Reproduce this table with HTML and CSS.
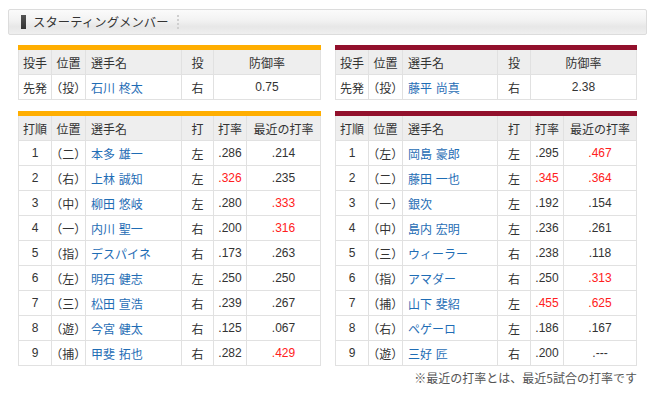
FILE: index.html
```html
<!DOCTYPE html>
<html lang="ja">
<head>
<meta charset="utf-8">
<title>スターティングメンバー</title>
<link rel="stylesheet" href="styles.css">
</head>
<body>
<div class="page">
  <div class="title">
    <span class="title-bar"></span>
    <span class="title-text">スターティングメンバー</span>
    <span class="title-sep"></span>
  </div>

  <div class="games">
    <div class="side">
      <div class="tbl home">
        <table>
          <colgroup><col class="c-order"><col class="c-pos"><col class="c-name"><col class="c-hand"><col></colgroup>
          <tr><th>投手</th><th>位置</th><th class="name">選手名</th><th>投</th><th>防御率</th></tr>
          <tr><td>先発</td><td class="pos">（投）</td><td class="name"><a>石川 柊太</a></td><td>右</td><td>0.75</td></tr>
        </table>
      </div>
      <div class="tbl home">
        <table>
          <colgroup><col class="c-order"><col class="c-pos"><col class="c-name"><col class="c-hand"><col class="c-avg"><col></colgroup>
          <tr><th>打順</th><th>位置</th><th class="name">選手名</th><th>打</th><th>打率</th><th>最近の打率</th></tr>
          <tr><td>1</td><td class="pos">（二）</td><td class="name"><a>本多 雄一</a></td><td>左</td><td>.286</td><td>.214</td></tr>
          <tr><td>2</td><td class="pos">（右）</td><td class="name"><a>上林 誠知</a></td><td>左</td><td class="hot">.326</td><td>.235</td></tr>
          <tr><td>3</td><td class="pos">（中）</td><td class="name"><a>柳田 悠岐</a></td><td>左</td><td>.280</td><td class="hot">.333</td></tr>
          <tr><td>4</td><td class="pos">（一）</td><td class="name"><a>内川 聖一</a></td><td>右</td><td>.200</td><td class="hot">.316</td></tr>
          <tr><td>5</td><td class="pos">（指）</td><td class="name"><a>デスパイネ</a></td><td>右</td><td>.173</td><td>.263</td></tr>
          <tr><td>6</td><td class="pos">（左）</td><td class="name"><a>明石 健志</a></td><td>左</td><td>.250</td><td>.250</td></tr>
          <tr><td>7</td><td class="pos">（三）</td><td class="name"><a>松田 宣浩</a></td><td>右</td><td>.239</td><td>.267</td></tr>
          <tr><td>8</td><td class="pos">（遊）</td><td class="name"><a>今宮 健太</a></td><td>右</td><td>.125</td><td>.067</td></tr>
          <tr><td>9</td><td class="pos">（捕）</td><td class="name"><a>甲斐 拓也</a></td><td>右</td><td>.282</td><td class="hot">.429</td></tr>
        </table>
      </div>
    </div>

    <div class="side right">
      <div class="tbl away">
        <table>
          <colgroup><col class="c-order"><col class="c-pos"><col class="c-name2"><col class="c-hand2"><col></colgroup>
          <tr><th>投手</th><th>位置</th><th class="name">選手名</th><th>投</th><th>防御率</th></tr>
          <tr><td>先発</td><td class="pos">（投）</td><td class="name"><a>藤平 尚真</a></td><td>右</td><td>2.38</td></tr>
        </table>
      </div>
      <div class="tbl away">
        <table>
          <colgroup><col class="c-order"><col class="c-pos"><col class="c-name2"><col class="c-hand2"><col class="c-avg"><col></colgroup>
          <tr><th>打順</th><th>位置</th><th class="name">選手名</th><th>打</th><th>打率</th><th>最近の打率</th></tr>
          <tr><td>1</td><td class="pos">（左）</td><td class="name"><a>岡島 豪郎</a></td><td>左</td><td>.295</td><td class="hot">.467</td></tr>
          <tr><td>2</td><td class="pos">（二）</td><td class="name"><a>藤田 一也</a></td><td>左</td><td class="hot">.345</td><td class="hot">.364</td></tr>
          <tr><td>3</td><td class="pos">（一）</td><td class="name"><a>銀次</a></td><td>左</td><td>.192</td><td>.154</td></tr>
          <tr><td>4</td><td class="pos">（中）</td><td class="name"><a>島内 宏明</a></td><td>左</td><td>.236</td><td>.261</td></tr>
          <tr><td>5</td><td class="pos">（三）</td><td class="name"><a>ウィーラー</a></td><td>右</td><td>.238</td><td>.118</td></tr>
          <tr><td>6</td><td class="pos">（指）</td><td class="name"><a>アマダー</a></td><td>右</td><td>.250</td><td class="hot">.313</td></tr>
          <tr><td>7</td><td class="pos">（捕）</td><td class="name"><a>山下 斐紹</a></td><td>左</td><td class="hot">.455</td><td class="hot">.625</td></tr>
          <tr><td>8</td><td class="pos">（右）</td><td class="name"><a>ペゲーロ</a></td><td>左</td><td>.186</td><td>.167</td></tr>
          <tr><td>9</td><td class="pos">（遊）</td><td class="name"><a>三好 匠</a></td><td>右</td><td>.200</td><td>.---</td></tr>
        </table>
      </div>
    </div>
  </div>

  <p class="note">※最近の打率とは、最近5試合の打率です</p>
</div>
</body>
</html>
```

FILE: styles.css
```css
html, body {
  margin: 0;
  padding: 0;
  background: #ffffff;
}

body {
  font-family: "Liberation Sans", "Noto Sans CJK JP", sans-serif;
  font-size: 12px;
  color: #333333;
}

.page {
  padding: 9px 3px 0 8px;
}

.title {
  box-sizing: border-box;
  height: 26px;
  border: 1px solid #dcdcdc;
  border-radius: 2px;
  background: linear-gradient(#fbfbfb 0%, #f3f3f3 40%, #e7e7e7 70%, #efefef 100%);
  display: flex;
  align-items: center;
  padding-left: 12px;
}

.title-bar {
  width: 5px;
  height: 14px;
  background: linear-gradient(#555555, #333333);
  margin-right: 7px;
}

.title-text {
  font-family: "Noto Sans CJK JP", sans-serif;
  font-size: 12.3px;
  letter-spacing: 0.1px;
  color: #333333;
}

.title-sep {
  margin-left: 8px;
  height: 14px;
  border-left: 2px dotted #cfcfcf;
}

.games {
  display: flex;
  gap: 14px;
  padding: 10px 10px 0;
}

.side {
  width: 303px;
  display: flex;
  flex-direction: column;
  gap: 11px;
}

.side.right {
  width: 302px;
}

.tbl.home {
  border-top: 5px solid #ffae00;
}

.tbl.away {
  border-top: 5px solid #92102c;
}

table {
  width: 100%;
  table-layout: fixed;
  border-collapse: separate;
  border-spacing: 0;
  border-left: 1px solid #e1e1e1;
}

.c-order { width: 33px; }
.c-pos { width: 34px; }
.c-name { width: 96px; }
.c-name2 { width: 95px; }
.c-hand { width: 32px; }
.c-hand2 { width: 33px; }
.c-avg { width: 33px; }

th, td {
  box-sizing: border-box;
  height: 25px;
  padding: 0;
  border-right: 1px solid #e1e1e1;
  border-bottom: 1px solid #e1e1e1;
  text-align: center;
  font-weight: normal;
  white-space: nowrap;
  overflow: hidden;
}

th {
  background: #eeeeee;
  font-family: "Noto Sans CJK JP", sans-serif;
}

td {
  background: #ffffff;
}

th.name, td.name {
  text-align: left;
  padding-left: 5px;
}

td.name a {
  color: #1f6db5;
  text-decoration: none;
  word-spacing: 1px;
  font-family: "Noto Sans CJK JP", sans-serif;
}

td.pos {
  font-family: "Noto Sans CJK JP", sans-serif;
  font-feature-settings: "palt";
  letter-spacing: 0.5px;
}

td.hot {
  color: #ff2020;
}

.note {
  margin: 4px 0 0;
  padding-right: 10px;
  text-align: right;
  line-height: 16px;
  color: #555555;
  font-family: "Noto Sans CJK JP", sans-serif;
}
```
